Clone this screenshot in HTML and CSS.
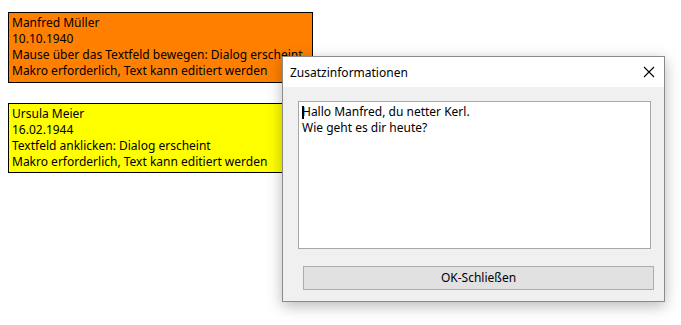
FILE: index.html
```html
<!DOCTYPE html>
<html lang="de">
<head>
    <meta charset="UTF-8">
    <title>Zusatzinformationen</title>
    <link rel="stylesheet" href="styles.css">
</head>
<body>
    <div class="card orange">
        <div>Manfred Müller</div>
        <div>10.10.1940</div>
        <div>Mause über das Textfeld bewegen: Dialog erscheint</div>
        <div>Makro erforderlich, Text kann editiert werden</div>
    </div>
    <div class="card yellow">
        <div>Ursula Meier</div>
        <div>16.02.1944</div>
        <div>Textfeld anklicken: Dialog erscheint</div>
        <div>Makro erforderlich, Text kann editiert werden</div>
    </div>

    <div class="dialog">
        <div class="titlebar">
            <span class="title">Zusatzinformationen</span>
            <svg class="close" width="12" height="12" viewBox="0 0 12 12">
                <path d="M1 1 L11 11 M11 1 L1 11" stroke="#000" stroke-width="1.1" fill="none"/>
            </svg>
        </div>
        <div class="content">
            <div class="memo">
                <div class="line"><span class="caret"></span>Hallo Manfred, du netter Kerl.</div>
                <div class="line">Wie geht es dir heute?</div>
            </div>
            <div class="btn">OK-Schließen</div>
        </div>
    </div>
</body>
</html>
```

FILE: styles.css
```css
body{
    margin:0;
    padding:12px 8px;
    background:#fff;
    font-family:"Noto Sans","Open Sans",sans-serif;
    font-size:12px;
    color:#000;
}
.card{width:297px;height:64px;border:1px solid #000;padding:2px 3px 3px 3px;line-height:16px;white-space:nowrap;overflow:hidden;}
.orange{background:#ff8000;}
.yellow{background:#ffff00;margin-top:20px;padding-bottom:2px;}

.dialog{position:absolute;left:282px;top:56px;width:381px;height:244px;border:1px solid #8a8a8a;background:#f0f0f0;box-shadow:0 4px 14px rgba(0,0,0,0.28);display:flex;flex-direction:column;}
.titlebar{height:30px;background:#fff;display:flex;align-items:center;justify-content:space-between;padding:0 8px 0 7px;}
.title{font-size:12px;}
.close{margin-right:1px;}

.content{flex:1;display:flex;flex-direction:column;padding:14px 0 0 15px;}
.memo{border:1px solid #a7a7a7;background:#fff;padding:2px 3px;box-sizing:border-box;width:353px;height:148px;line-height:16px;}
.line{position:relative;}
.caret{position:absolute;left:0;top:2px;width:2px;height:13px;background:#000;}
.btn{margin:17px 0 0 5px;width:349px;height:22px;border:1px solid #adadad;background:#e1e1e1;text-align:center;line-height:22px;}
```
